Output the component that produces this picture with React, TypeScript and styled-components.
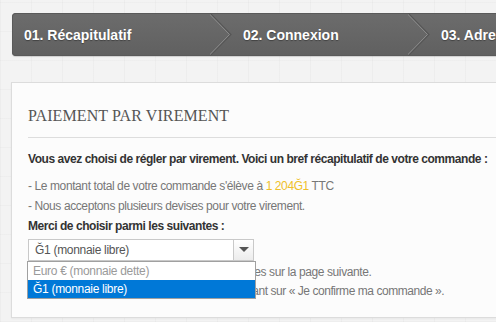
import React from 'react';
import styled, { createGlobalStyle } from 'styled-components';

const GlobalStyle = createGlobalStyle`
  html, body {
    margin: 0;
    padding: 0;
    width: 496px;
    height: 322px;
    overflow: hidden;
  }
  body {
    font-family: "Liberation Sans", Arial, sans-serif;
    background-color: #f3f3f3;
    background-image:
      repeating-linear-gradient(90deg, rgba(0,0,0,0.025) 0 1px, transparent 1px 31px),
      repeating-linear-gradient(0deg, rgba(0,0,0,0.02) 0 1px, transparent 1px 29px);
  }
`;

const Page = styled.div`
  width: 540px;
  padding: 13px 0 0 11px;
`;

const StepBar = styled.div`
  display: flex;
  height: 43px;
  margin-left: 1px;
  border-radius: 4px;
  background: linear-gradient(#6c6c6c, #606060);
  box-shadow: inset 0 0 0 1px #5a5a5a, 0 1px 1px rgba(0,0,0,0.15);
  overflow: hidden;
`;

const Step = styled.div<{ $width: number; $pad: number }>`
  display: flex;
  flex: 0 0 auto;
  width: ${p => p.$width}px;
  padding-left: ${p => p.$pad}px;
  box-sizing: border-box;
`;

const StepLabel = styled.div`
  flex: 1;
  display: flex;
  align-items: center;
  color: #fff;
  font-weight: bold;
  font-size: 14px;
  white-space: nowrap;
  text-shadow: 0 1px 1px rgba(0,0,0,0.35);
`;

const Chevron = () => (
  <svg width="22" height="43" viewBox="0 0 22 43" style={{ flex: '0 0 22px' }}>
    <polyline points="0,0 21,21.5 0,43" fill="none" stroke="#565656" strokeWidth="1.2" />
    <polyline points="-1.5,0 19.5,21.5 -1.5,43" fill="none" stroke="#8c8c8c" strokeWidth="1" />
  </svg>
);

const Panel = styled.div`
  margin-top: 26px;
  background: #fcfcfc;
  border: 1px solid #dcdcdc;
  padding: 23px 16px 15px 16px;
  box-shadow: 0 1px 2px rgba(0,0,0,0.05);
`;

const Title = styled.h1`
  margin: 0;
  font-family: "Liberation Serif", "DejaVu Serif", serif;
  font-weight: normal;
  font-size: 16px;
  line-height: 20px;
  letter-spacing: 0.1px;
  color: #555;
  padding-bottom: 11px;
  border-bottom: 1px solid #dddddd;
`;

const Lead = styled.p`
  margin: 12px 0 0;
  font-size: 12px;
  line-height: 19px;
  font-weight: bold;
  letter-spacing: -0.45px;
  color: #333;
  white-space: nowrap;
`;

const Line = styled.p<{ $top?: number; $tight?: number }>`
  margin: ${p => p.$top ?? 0}px 0 0;
  font-size: 12px;
  line-height: 19.5px;
  letter-spacing: ${p => p.$tight ?? -0.4}px;
  color: #777;
  white-space: nowrap;
`;

const Amount = styled.span`
  color: #efc02a;
`;

const Label = styled.p`
  margin: 1px 0 0;
  font-size: 12px;
  line-height: 19.5px;
  font-weight: bold;
  letter-spacing: -0.45px;
  color: #333;
`;

const SelectWrap = styled.div`
  position: relative;
  width: 226px;
  margin-top: 2px;
  margin-bottom: 2px;
`;

const SelectBox = styled.div`
  display: flex;
  align-items: center;
  height: 22px;
  border: 1px solid #c9c9c9;
  background: #fff;
  box-sizing: border-box;
  font-size: 12px;
  letter-spacing: -0.3px;
  color: #555;
`;

const SelectValue = styled.span`
  flex: 1;
  padding-left: 6px;
`;

const SelectButton = styled.div`
  width: 21px;
  height: 22px;
  margin: -1px -1px -1px 0;
  box-sizing: border-box;
  border: 1px solid #c9c9c9;
  background: linear-gradient(#ffffff, #ececec);
  display: flex;
  align-items: center;
  justify-content: center;
`;

const Caret = styled.span`
  width: 0;
  height: 0;
  border-left: 5px solid transparent;
  border-right: 5px solid transparent;
  border-top: 5px solid #555;
`;

const OptionList = styled.ul`
  position: absolute;
  top: 22px;
  left: -1px;
  width: 227px;
  margin: 0;
  padding: 0;
  list-style: none;
  background: #fff;
  border: 1px solid #a0a0a0;
  z-index: 2;
`;

const Option = styled.li<{ $selected?: boolean; $disabled?: boolean }>`
  height: 18px;
  line-height: 18px;
  padding-left: 5px;
  font-size: 12px;
  letter-spacing: -0.3px;
  background: ${p => (p.$selected ? '#0078d7' : '#fff')};
  color: ${p => (p.$selected ? '#fff' : p.$disabled ? '#9a9a9a' : '#333')};
`;

const steps = [
  { label: '01. Récapitulatif', width: 220, pad: 12 },
  { label: '02. Connexion', width: 198, pad: 11 },
  { label: '03. Adresse', width: 198, pad: 11 },
];

export default function App() {
  return (
    <Page>
      <GlobalStyle />
      <StepBar>
        {steps.map(s => (
          <Step key={s.label} $width={s.width} $pad={s.pad}>
            <StepLabel>{s.label}</StepLabel>
            <Chevron />
          </Step>
        ))}
      </StepBar>
      <Panel>
        <Title>PAIEMENT PAR VIREMENT</Title>
        <Lead>Vous avez choisi de régler par virement. Voici un bref récapitulatif de votre commande :</Lead>
        <Line $top={8}>
          - Le montant total de votre commande s'élève à <Amount>1 204Ğ1</Amount> TTC
        </Line>
        <Line>- Nous acceptons plusieurs devises pour votre virement.</Line>
        <Label>Merci de choisir parmi les suivantes :</Label>
        <SelectWrap>
          <SelectBox>
            <SelectValue>Ğ1 (monnaie libre)</SelectValue>
            <SelectButton>
              <Caret />
            </SelectButton>
          </SelectBox>
          <OptionList>
            <Option $disabled>Euro € (monnaie dette)</Option>
            <Option $selected>Ğ1 (monnaie libre)</Option>
          </OptionList>
        </SelectWrap>
        <Line>- Nos coordonnées bancaires seront présentées sur la page suivante.</Line>
        <Line $tight={-0.45}>- Merci de confirmer votre commande en cliquant sur « Je confirme ma commande ».</Line>
      </Panel>
    </Page>
  );
}
